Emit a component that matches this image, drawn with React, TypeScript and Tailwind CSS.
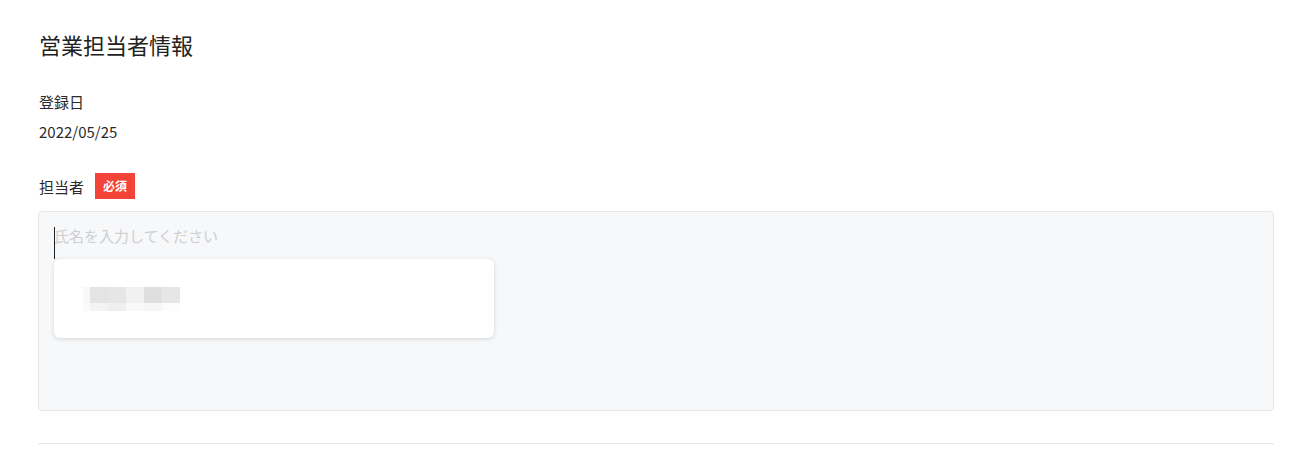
const font = {
  fontFamily: '"Noto Sans CJK JP", "Noto Sans", sans-serif',
};

// pixelated (mosaic) name in the suggestion card
const topRow = ["#f8f8f8", "#e4e4e4", "#e6e6e6", "#f1f1f1", "#dfdfdf", "#e6e6e6"];
const bottomRow = ["#fafafa", "#f3f3f3", "#efefef", "#f8f8f8", "#f6f6f6", "#fcfcfc"];
const widths = ["w-[7px]", "w-[18px]", "w-[18px]", "w-[18px]", "w-[18px]", "w-[18px]"];

function Mosaic() {
  return (
    <div className="flex flex-col">
      <div className="flex h-[16px]">
        {topRow.map((c, i) => (
          <div key={i} className={`h-full ${widths[i]}`} style={{ background: c }} />
        ))}
      </div>
      <div className="flex h-[8px]">
        {bottomRow.map((c, i) => (
          <div key={i} className={`h-full ${widths[i]}`} style={{ background: c }} />
        ))}
      </div>
    </div>
  );
}

export default function App() {
  return (
    <div className="min-h-[476px] w-full bg-white pl-[38px] pr-[40px] pt-[28px]" style={font}>
      <h1 className="pl-px text-[22px] font-normal leading-[33px] text-[#222]">
        営業担当者情報
      </h1>

      <div className="mt-[30px] pl-px text-[15px] leading-[21px] text-[#2b2b2b]">登録日</div>
      <div className="mt-[9px] pl-px text-[15px] leading-[21px] text-[#2b2b2b]">2022/05/25</div>

      <div className="mt-[31px] flex h-[26px] items-center gap-[11px] pl-px">
        <span className="text-[15px] leading-[21px] text-[#2b2b2b]">担当者</span>
        <span className="flex h-[26px] w-[40px] items-center justify-center bg-[#f4443a] text-[12px] font-bold text-white">
          必須
        </span>
      </div>

      <div className="mt-[12px] h-[200px] rounded-[4px] border border-[#e4e6ea] bg-[#f7f8fa] px-[15px] pt-[15px]">
        <div className="relative h-[32px]">
          <div className="absolute left-0 top-0 h-[32px] w-px bg-[#222]" />
          <div className="text-[15px] leading-[18px] text-[#cfcfcf]">氏名を入力してください</div>
        </div>
        <div className="h-[79px] w-[440px] rounded-[6px] bg-white pl-[29px] pt-[28px] shadow-[0_1px_4px_rgba(0,0,0,0.15)]">
          <Mosaic />
        </div>
      </div>

      <div className="mt-[32px] h-px bg-[#e5e6e9]" />
    </div>
  );
}
